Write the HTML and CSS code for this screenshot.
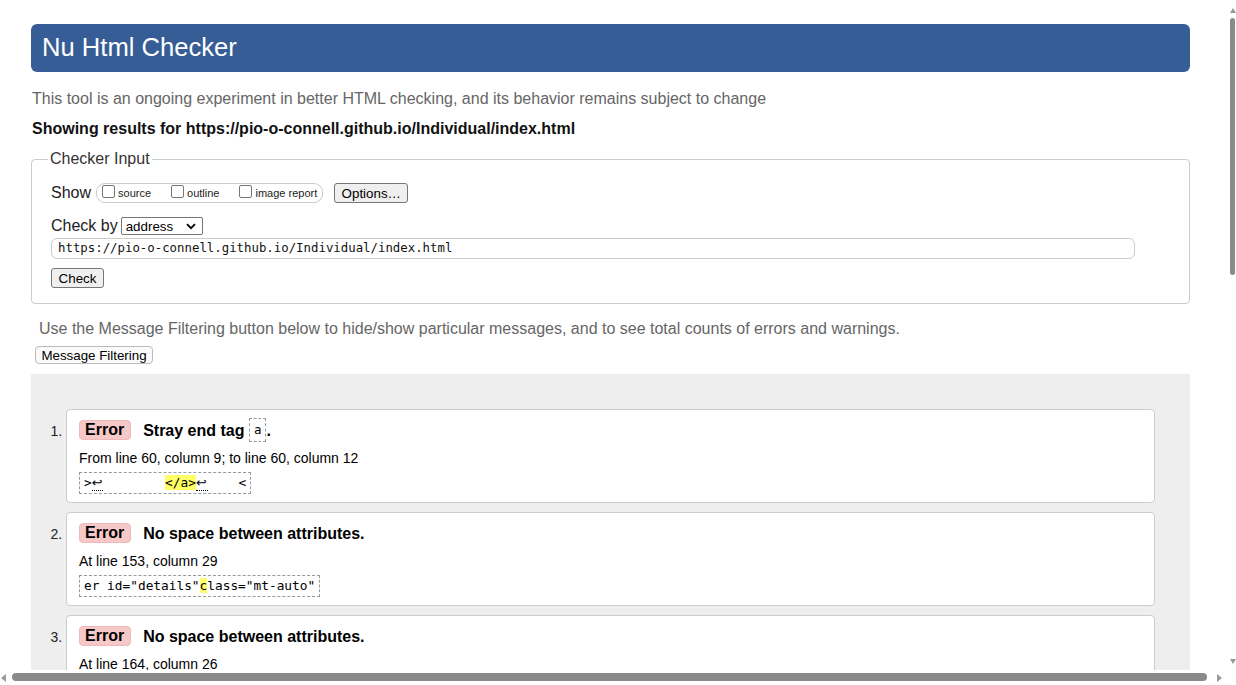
FILE: index.html
```html
<!DOCTYPE html>
<html lang="en">
<head>
<meta charset="utf-8">
<title>Nu Html Checker</title>
<link rel="stylesheet" href="styles.css">
</head>
<body>
<div class="page">
  <h1 class="title">Nu Html Checker</h1>
  <p class="intro">This tool is an ongoing experiment in better HTML checking, and its behavior remains subject to change</p>
  <p class="showing">Showing results for https://pio-o-connell.github.io/Individual/index.html</p>

  <fieldset class="input">
    <legend>Checker Input</legend>
    <div class="row show-row">
      <span class="lbl">Show</span>
      <span class="opts">
        <label class="opt"><input type="checkbox" class="cb">source</label>
        <label class="opt"><input type="checkbox" class="cb">outline</label>
        <label class="opt"><input type="checkbox" class="cb">image report</label>
      </span>
      <button class="btn options">Options…</button>
    </div>
    <div class="row checkby-row">
      <span class="lbl">Check by</span>
      <span class="select">address
        <svg class="chev" width="10" height="7" viewBox="0 0 10 7"><path d="M1 1.2 L5 5.2 L9 1.2" fill="none" stroke="#000" stroke-width="1.8"/></svg>
      </span>
    </div>
    <div class="url">https://pio-o-connell.github.io/Individual/index.html</div>
    <button class="btn check">Check</button>
  </fieldset>

  <p class="filter-note">Use the Message Filtering button below to hide/show particular messages, and to see total counts of errors and warnings.</p>
  <button class="filter-btn">Message Filtering</button>

  <div class="results">
    <ol class="msgs">
      <li class="msg">
        <p class="msg-line"><strong class="badge">Error</strong><span class="msg-text">Stray end tag <code class="tag">a</code>.</span></p>
        <p class="loc">From line 60, column 9; to line 60, column 12</p>
        <pre class="extract">&gt;<span class="lf">↩</span>        <mark>&lt;/a&gt;</mark><span class="lf">↩</span>    &lt;</pre>
      </li>
      <li class="msg">
        <p class="msg-line"><strong class="badge">Error</strong><span class="msg-text">No space between attributes.</span></p>
        <p class="loc">At line 153, column 29</p>
        <pre class="extract">er id="details"<mark>c</mark>lass="mt-auto"</pre>
      </li>
      <li class="msg">
        <p class="msg-line"><strong class="badge">Error</strong><span class="msg-text">No space between attributes.</span></p>
        <p class="loc">At line 164, column 26</p>
      </li>
    </ol>
  </div>
</div>

<div class="vbar">
  <span class="arrow up"></span>
  <span class="vthumb"></span>
  <span class="arrow down"></span>
</div>
<div class="hbar">
  <span class="arrow left"></span>
  <span class="hthumb"></span>
  <span class="arrow right"></span>
</div>
</body>
</html>
```

FILE: styles.css
```css
* { box-sizing: border-box; }

html, body {
  margin: 0;
  padding: 0;
  background: #fff;
}

body {
  font-family: "Liberation Sans", Arial, sans-serif;
  color: #000;
  height: 685px;
  overflow: hidden;
}

.page {
  width: 1159px;
  margin-left: 31px;
  padding-top: 24px;
}

.title {
  margin: 0;
  height: 48px;
  line-height: 47px;
  padding-left: 11px;
  background: #365d95;
  color: #fff;
  font-size: 25.6px;
  font-weight: normal;
  border-radius: 6px;
}

.intro {
  margin: 18px 0 0 1px;
  font-size: 16px;
  line-height: 18px;
  color: #666;
}

.showing {
  margin: 12px 0 0 1px;
  font-size: 16px;
  line-height: 18px;
  font-weight: bold;
  color: #111;
}

/* Checker input fieldset */
.input {
  margin: 12px 0 0;
  min-width: 0;
  border: 1px solid #ccc;
  border-radius: 4px;
  padding: 15px 19px 15px;
}

.input legend {
  margin-left: -3px;
  padding: 0 2px;
  font-size: 16px;
  line-height: 18px;
  color: #333;
}

.row {
  display: flex;
  align-items: center;
}

.lbl {
  font-size: 16px;
  line-height: 18px;
  color: #222;
}

.show-row { height: 20px; }

.opts {
  display: flex;
  align-items: center;
  height: 20px;
  margin-left: 5px;
  padding: 0 5px;
  border: 1px solid #ccc;
  border-radius: 9px;
}

.opt {
  display: flex;
  align-items: center;
  font-size: 11px;
  line-height: 13px;
  margin-right: 20px;
  color: #222;
}

.opt:last-child { margin-right: 0; }

.cb {
  appearance: none;
  -webkit-appearance: none;
  width: 13px;
  height: 13px;
  margin: 0 3px 3px 0;
  border: 1px solid #767676;
  border-radius: 2px;
  background: #fff;
}

.btn {
  height: 20px;
  padding: 0;
  font-family: "Liberation Sans", Arial, sans-serif;
  font-size: 13.33px;
  color: #000;
  background: #efefef;
  border: 1px solid #767676;
  border-radius: 3px;
}

.options {
  width: 74px;
  margin-left: 11px;
}

.checkby-row {
  margin-top: 14px;
  height: 18px;
}

.select {
  display: flex;
  align-items: center;
  justify-content: space-between;
  width: 82px;
  height: 18px;
  margin-left: 3px;
  padding: 0 6px 0 4px;
  font-size: 13.33px;
  border: 1px solid #767676;
  border-radius: 2px;
  background: #fff;
}

.url {
  width: 1084px;
  height: 21px;
  margin-top: 3px;
  padding-left: 6px;
  font-family: "DejaVu Sans Mono", "Liberation Mono", monospace;
  font-size: 12.36px;
  line-height: 19px;
  border: 1px solid #ccc;
  border-radius: 6px;
  color: #111;
}

.check {
  display: block;
  width: 53px;
  margin-top: 9px;
}

.filter-note {
  margin: 16px 0 0 8px;
  font-size: 16px;
  line-height: 18px;
  color: #666;
}

.filter-btn {
  display: block;
  width: 118px;
  height: 18px;
  margin: 8px 0 0 4px;
  padding: 0;
  font-family: "Liberation Sans", Arial, sans-serif;
  font-size: 13.33px;
  color: #000;
  background: #fafafa;
  border: 1px solid #bbb;
  border-radius: 4px;
}

/* Results */
.results {
  margin-top: 10px;
  padding: 35px 35px 40px;
  background: #eee;
}

.msgs {
  margin: 0;
  padding: 0;
  list-style: decimal outside;
}

.msg {
  margin-bottom: 9px;
  padding: 8px 12px;
  background: #fff;
  border: 1px solid #ccc;
  border-radius: 4px;
  font-size: 14px;
}

.msg:last-child {
  padding-bottom: 40px;
}

.msg::marker {
  font-size: 14px;
  color: #222;
}

.msg-line {
  margin: 0;
  font-size: 16px;
  line-height: 25px;
  font-weight: bold;
}

.badge {
  display: inline-block;
  vertical-align: top;
  margin: 2px 12px 0 0;
  padding: 0 6px 0 5px;
  line-height: 18px;
  background: #f7c8c8;
  border: 1px solid #f0b8b8;
  border-radius: 4px;
}

.tag {
  display: inline-block;
  vertical-align: top;
  padding: 0 4px;
  font-family: "DejaVu Sans Mono", "Liberation Mono", monospace;
  font-size: 12.5px;
  font-weight: normal;
  line-height: 22px;
  border: 1px dashed #999;
}

.loc {
  margin: 6px 0 0;
  font-size: 14px;
  line-height: 18px;
}

.extract {
  width: fit-content;
  margin: 5px 0 0;
  padding: 0 4px;
  font-family: "DejaVu Sans Mono", "Liberation Mono", monospace;
  font-size: 12.8px;
  line-height: 20px;
  white-space: pre;
  border: 1px dashed #999;
}

.extract mark {
  background: #ffff66;
  color: inherit;
}

.lf {
  font-family: "DejaVu Sans", sans-serif;
  letter-spacing: 1px;
  border-bottom: 1px dotted #000;
}

/* Overlay scrollbars */
.vbar {
  position: fixed;
  top: 0;
  right: 0;
  width: 8px;
  height: 670px;
}

.vthumb {
  position: absolute;
  top: 18px;
  left: 2px;
  width: 5px;
  height: 257px;
  background: #8a8a8a;
  border-radius: 3px;
}

.hbar {
  position: fixed;
  left: 0;
  right: 0;
  bottom: 0;
  height: 15px;
  background: #fff;
}

.hthumb {
  position: absolute;
  top: 3px;
  left: 12px;
  width: 1195px;
  height: 8px;
  background: #8a8a8a;
  border-radius: 4px;
}

.arrow {
  position: absolute;
  width: 0;
  height: 0;
  border-style: solid;
  border-color: transparent;
}

.arrow.up {
  top: 8px;
  left: 2px;
  border-width: 0 3px 5px;
  border-bottom-color: #999;
}

.arrow.down {
  bottom: 6px;
  left: 2px;
  border-width: 5px 3px 0;
  border-top-color: #999;
}

.arrow.left {
  top: 4px;
  left: 1px;
  border-width: 4px 5px 4px 0;
  border-right-color: #999;
}

.arrow.right {
  top: 4px;
  left: 1217px;
  border-width: 4px 0 4px 5px;
  border-left-color: #999;
}
```
